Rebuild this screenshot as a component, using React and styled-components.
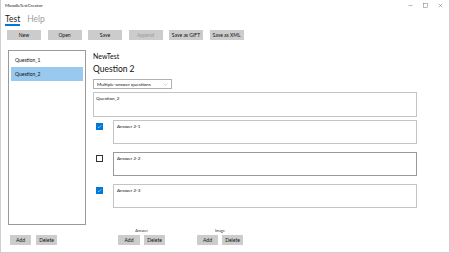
import React from 'react';
import styled, { createGlobalStyle } from 'styled-components';

const Global = createGlobalStyle`
  body {
    margin: 0;
    background: #fff;
    font-family: Lato, "Open Sans", sans-serif;
  }
`;

const Window = styled.div`
  width: 450px;
  height: 253px;
  box-sizing: border-box;
  border: 1px solid #cfcfcf;
  border-top: none;
  display: flex;
  flex-direction: column;
  background: #fff;
  overflow: hidden;
`;

const TitleBar = styled.div`
  height: 11px;
  display: flex;
  align-items: center;
  justify-content: space-between;
  padding: 0 4px 0 4px;
  font-size: 4.5px;
  color: #222;
`;

const Controls = styled.div`
  display: flex;
  align-items: center;
  gap: 10px;
  padding-right: 2px;
  svg {
    width: 5px;
    height: 5px;
    stroke: #555;
    fill: none;
    stroke-width: 0.8;
  }
`;

const TabBar = styled.div`
  display: flex;
  gap: 7px;
  padding: 3px 4px 0;
  height: 13px;
`;

const Tab = styled.div`
  font-size: 8.5px;
  line-height: 10px;
  color: ${p => (p.active ? '#222' : '#a0a0a0')};
  &::after {
    content: '';
    display: ${p => (p.active ? 'block' : 'none')};
    height: 1.5px;
    background: #0078d7;
  }
`;

const Toolbar = styled.div`
  display: flex;
  gap: 6.5px;
  padding: 3px 0 0 6px;
`;

const Button = styled.button`
  width: ${p => p.w || 34}px;
  height: 10px;
  padding: 0;
  border: none;
  background: #cccccc;
  font-family: inherit;
  font-size: 5px;
  line-height: 10px;
  color: ${p => (p.disabled ? '#9a9a9a' : '#111')};
`;

const Body = styled.div`
  display: grid;
  grid-template-columns: 78px 1fr;
  grid-template-rows: 175px auto;
  column-gap: 7px;
  row-gap: 3px;
  padding: 10px 0 0 7px;
`;

const List = styled.div`
  border: 1px solid #9a9a9a;
  box-sizing: border-box;
  padding: 2px 2px;
  display: flex;
  flex-direction: column;
`;

const Item = styled.div`
  height: 14px;
  line-height: 14px;
  padding-left: 4px;
  font-size: 5px;
  color: #111;
  background: ${p => (p.selected ? '#99c9ef' : 'transparent')};
`;

const LeftActions = styled.div`
  display: flex;
  gap: 5px;
  align-self: end;
  padding-left: 2px;
`;

const Editor = styled.div`
  display: flex;
  flex-direction: column;
  width: 324px;
`;

const TestName = styled.div`
  font-size: 7px;
  line-height: 10px;
  padding-top: 1px;
  color: #111;
`;

const QuestionTitle = styled.div`
  font-size: 8.5px;
  line-height: 12px;
  margin-top: 2px;
  color: #111;
`;

const Select = styled.div`
  margin-top: 4px;
  width: 79px;
  height: 10px;
  box-sizing: border-box;
  border: 1px solid #b0b0b0;
  display: flex;
  align-items: center;
  justify-content: space-between;
  padding: 0 3px 0 3px;
  font-size: 4.6px;
  color: #111;
  svg {
    width: 5px;
    height: 3px;
    stroke: #888;
    fill: none;
    stroke-width: 0.7;
  }
`;

const TextBox = styled.div`
  box-sizing: border-box;
  height: ${p => p.h || 24}px;
  flex: ${p => (p.grow ? 1 : 'none')};
  border: 1px solid ${p => (p.dark ? '#9a9a9a' : '#c4c4c4')};
  padding: 2px ${p => p.pad || 3}px;
  font-size: 4.6px;
  line-height: 6px;
  color: #111;
`;

const QuestionBox = styled(TextBox)`
  margin-top: 3px;
`;

const Answers = styled.div`
  display: flex;
  flex-direction: column;
  gap: 8px;
  margin-top: 3px;
`;

const AnswerRow = styled.div`
  display: flex;
  align-items: flex-start;
`;

const Check = styled.div`
  width: 7px;
  height: 7px;
  box-sizing: border-box;
  margin: 3px 10px 0 3px;
  background: ${p => (p.checked ? '#0078d7' : '#fff')};
  border: 1px solid ${p => (p.checked ? '#0078d7' : '#333')};
  display: flex;
  align-items: center;
  justify-content: center;
  svg {
    width: 5px;
    height: 5px;
    stroke: #fff;
    fill: none;
    stroke-width: 1;
  }
`;

const RightActions = styled.div`
  display: flex;
  gap: 32px;
  padding-left: 25px;
  align-self: end;
`;

const Group = styled.div`
  display: flex;
  flex-direction: column;
  align-items: center;
  gap: 2px;
`;

const GroupLabel = styled.div`
  font-size: 3.8px;
  line-height: 5px;
  color: #333;
`;

const Pair = styled.div`
  display: flex;
  gap: 4px;
`;

const CheckMark = () => (
  <svg viewBox="0 0 10 10">
    <path d="M1.5 5.2 L4 7.6 L8.7 2.4" />
  </svg>
);

const answers = [
  { text: 'Answer 2-1', checked: true },
  { text: 'Answer 2-2', checked: false, dark: true },
  { text: 'Answer 2-3', checked: true },
];

export default function App() {
  return (
    <>
      <Global />
      <Window>
        <TitleBar>
          <span>MoodleTestCreator</span>
          <Controls>
            <svg viewBox="0 0 10 10"><path d="M1 5 H9" /></svg>
            <svg viewBox="0 0 10 10"><rect x="1.5" y="1.5" width="7" height="7" /></svg>
            <svg viewBox="0 0 10 10"><path d="M1.5 1.5 L8.5 8.5 M8.5 1.5 L1.5 8.5" /></svg>
          </Controls>
        </TitleBar>
        <TabBar>
          <Tab active>Test</Tab>
          <Tab>Help</Tab>
        </TabBar>
        <Toolbar>
          <Button>New</Button>
          <Button>Open</Button>
          <Button>Save</Button>
          <Button disabled>Append</Button>
          <Button>Save as GIFT</Button>
          <Button>Save as XML</Button>
        </Toolbar>
        <Body>
          <List>
            <Item>Question_1</Item>
            <Item selected>Question_2</Item>
          </List>
          <Editor>
            <TestName>NewTest</TestName>
            <QuestionTitle>Question 2</QuestionTitle>
            <Select>
              <span>Multiple-answer questions</span>
              <svg viewBox="0 0 10 6"><path d="M1 1 L5 5 L9 1" /></svg>
            </Select>
            <QuestionBox h={25} pad={2}>Question_2</QuestionBox>
            <Answers>
              {answers.map(a => (
                <AnswerRow key={a.text}>
                  <Check checked={a.checked}>{a.checked && <CheckMark />}</Check>
                  <TextBox grow dark={a.dark}>{a.text}</TextBox>
                </AnswerRow>
              ))}
            </Answers>
          </Editor>
          <LeftActions>
            <Button w={21}>Add</Button>
            <Button w={21}>Delete</Button>
          </LeftActions>
          <RightActions>
            <Group>
              <GroupLabel>Answer</GroupLabel>
              <Pair>
                <Button w={22}>Add</Button>
                <Button w={21}>Delete</Button>
              </Pair>
            </Group>
            <Group>
              <GroupLabel>Image</GroupLabel>
              <Pair>
                <Button w={21}>Add</Button>
                <Button w={21}>Delete</Button>
              </Pair>
            </Group>
          </RightActions>
        </Body>
      </Window>
    </>
  );
}
